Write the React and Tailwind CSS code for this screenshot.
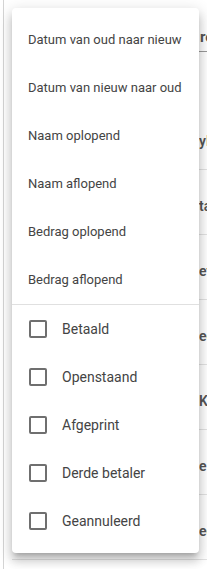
import React from "react";

const sortOptions = [
  "Datum van oud naar nieuw",
  "Datum van nieuw naar oud",
  "Naam oplopend",
  "Naam aflopend",
  "Bedrag oplopend",
  "Bedrag aflopend",
];

const statusFilters = ["Betaald", "Openstaand", "Afgeprint", "Derde betaler", "Geannuleerd"];

// fragments of the table cells that peek out to the right of the menu
const rowBits = ["yl", "ta", "et", "ee", "Kr", "e", "eg"];

function CheckBox() {
  return (
    <span className="flex h-6 w-6 flex-none items-center justify-center">
      <span className="h-[18px] w-[18px] rounded-[2px] border-2 border-[#6f6f6f]" />
    </span>
  );
}

export default function App() {
  return (
    <div
      className="relative h-[569px] w-[207px] overflow-hidden bg-white text-[#444]"
      style={{ fontFamily: "Roboto, 'Noto Sans', sans-serif" }}
    >
      {/* page behind the menu */}
      <div className="flex h-full">
        <div className="ml-[3px] w-px flex-none bg-[#d4d4d4]" />
        <div className="ml-[8px] flex flex-1 flex-col">
          <div className="flex h-[52px] flex-none items-end border-b border-[#9a9a9a] pb-[3px] pl-[188px] text-[15px] font-bold text-[#555]">
            re
          </div>
          <div className="h-[53px] flex-none" />
          {rowBits.map((bit) => (
            <div
              key={bit}
              className="flex h-[65px] flex-none items-center border-b border-[#e3e3e3] pl-[187px] pt-[8px] text-[14px] font-semibold text-[#555]"
            >
              {bit}
            </div>
          ))}
        </div>
      </div>

      {/* popover menu */}
      <div className="absolute left-[12px] top-[8px] w-[187px] rounded-[4px] bg-white py-2 shadow-[0px_5px_5px_-3px_rgba(0,0,0,0.2),0px_8px_10px_1px_rgba(0,0,0,0.14),0px_3px_14px_2px_rgba(0,0,0,0.12)]">
        <ul>
          {sortOptions.map((label) => (
            <li key={label} className="flex h-12 items-center whitespace-nowrap px-4 text-[13px]">
              {label}
            </li>
          ))}
        </ul>
        <div className="h-px bg-[#e0e0e0]" />
        <ul>
          {statusFilters.map((label) => (
            <li key={label} className="flex h-12 items-center gap-3 pl-[14px] text-[14px]">
              <CheckBox />
              <span>{label}</span>
            </li>
          ))}
        </ul>
      </div>
    </div>
  );
}
